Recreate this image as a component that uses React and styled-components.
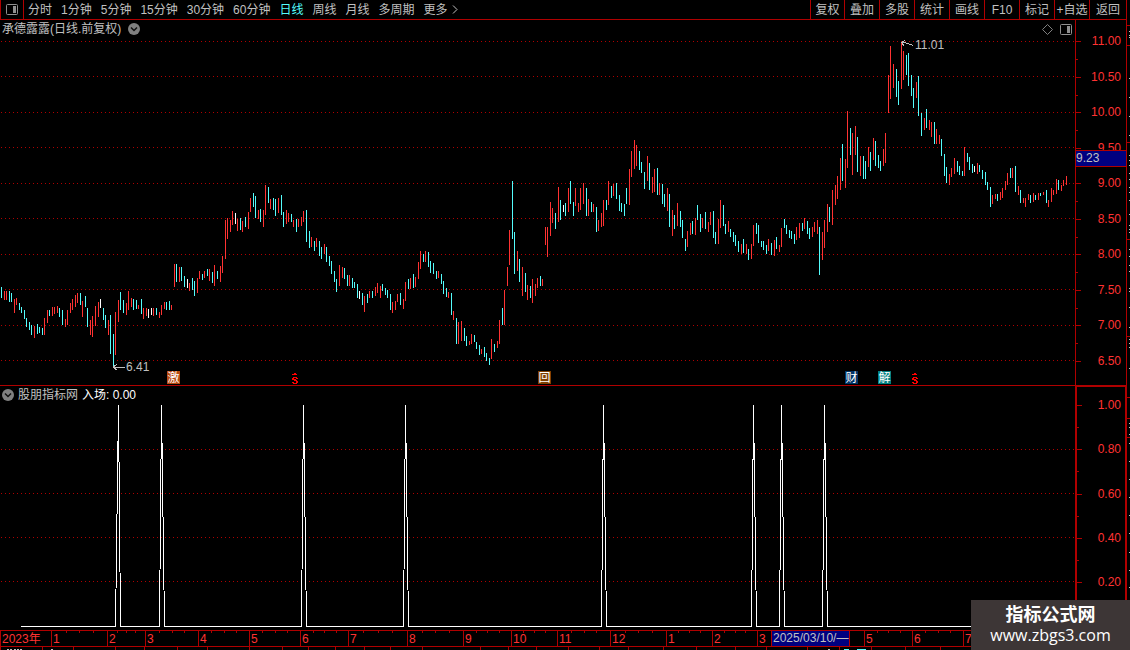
import React, { useState } from 'react';
import styled, { createGlobalStyle } from 'styled-components';

const GlobalStyle = createGlobalStyle`
  * { box-sizing: border-box; }
  body {
    margin: 0;
    background: #000;
    color: #c0c0c0;
    font-family: 'Liberation Sans', 'Noto Sans CJK SC', sans-serif;
    font-size: 12px;
    line-height: 14px;
  }
`;

const PLOT_W = 1075;

const periods = ['分时', '1分钟', '5分钟', '15分钟', '30分钟', '60分钟', '日线', '周线', '月线', '多周期'];
const tools = ['复权', '叠加', '多股', '统计', '画线', 'F10', '标记', '+自选', '返回'];

// one entry per day: x, high, low, r = up, c = down, w = flat
const bars = `
1 287 298 c,4 291 300 r,6 291 300 r,9 291 302 c,11 293 302 c,14 299 313 r,16 298 305 r,19 303 310 c,21 307 313 c,24 310 319 c,
26 318 327 c,29 322 330 c,31 325 335 c,34 326 338 r,37 324 334 c,39 327 333 c,42 328 335 c,44 318 335 r,47 310 323 r,49 310 316 c,
52 307 316 r,54 307 314 r,57 306 313 r,59 308 317 c,62 310 325 c,65 319 327 r,67 310 325 r,70 303 313 r,72 299 310 r,75 295 307 r,
77 293 303 r,80 293 305 c,82 301 317 r,85 296 307 c,87 308 327 c,90 320 335 r,92 316 337 r,95 306 326 r,98 302 317 r,100 299 308 w,
103 308 320 c,105 315 328 c,108 320 335 r,110 315 354 c,113 334 367 c,115 312 355 r,118 300 322 r,120 292 310 c,123 300 313 c,126 303 315 r,
128 291 310 r,131 298 307 r,133 299 310 c,136 300 309 c,138 305 309 r,141 299 314 c,143 308 319 r,146 308 316 r,148 309 318 w,151 308 315 w,
153 308 316 r,156 308 315 c,159 312 318 r,161 305 315 r,164 302 309 r,166 302 310 c,169 301 310 c,171 305 310 r,174 264 287 r,176 264 282 c,
179 267 282 r,181 267 281 c,184 276 287 c,187 279 288 w,189 283 291 r,192 278 290 c,194 281 296 c,197 278 293 r,199 271 279 r,202 274 280 c,
204 271 278 r,207 269 276 c,209 269 281 r,212 272 283 c,214 265 286 r,217 271 279 c,220 266 282 r,222 256 273 r,225 220 259 r,227 218 239 r,
230 220 232 r,232 211 225 r,235 213 224 w,237 219 231 r,240 218 230 c,242 221 232 r,245 217 227 c,248 212 229 r,250 198 212 r,253 193 207 c,
255 196 218 c,258 210 219 r,260 209 222 c,263 210 227 r,265 185 215 r,268 187 203 c,270 199 209 r,273 198 210 c,275 199 216 c,278 198 213 r,
281 195 215 c,283 212 227 c,286 210 224 r,288 213 222 r,291 214 222 c,293 220 227 r,296 219 232 c,298 219 227 r,301 217 226 r,303 211 222 r,
306 210 242 c,309 231 248 c,311 237 247 r,314 241 251 c,316 238 247 r,319 241 256 c,321 247 259 c,324 244 254 r,326 247 262 c,329 256 266 c,
331 261 274 c,334 271 282 c,336 279 292 c,339 265 286 r,342 267 278 r,344 268 279 c,347 275 286 c,349 275 286 r,352 278 288 c,354 282 288 c,
357 284 298 c,359 291 299 w,362 293 305 c,364 296 312 r,367 294 303 c,369 291 298 r,372 291 298 c,375 287 296 r,377 283 293 r,380 286 298 r,
382 284 291 c,385 288 295 c,387 290 298 c,390 294 310 c,392 302 313 r,395 301 310 r,397 294 302 r,400 293 305 c,403 299 309 r,405 282 301 r,
408 279 289 c,410 278 289 r,413 274 288 c,415 277 287 r,418 262 279 r,420 251 269 r,423 254 262 c,425 251 262 r,428 252 267 c,430 261 273 c,
433 263 274 c,436 271 279 c,438 271 278 r,441 274 284 c,443 281 294 c,446 288 297 c,448 292 298 r,451 293 315 c,453 311 320 r,456 318 344 c,
458 322 344 r,461 321 341 r,464 328 341 c,466 336 346 c,469 341 345 r,471 334 344 r,474 335 342 c,476 342 349 c,479 345 355 c,481 349 354 r,
484 347 357 c,486 353 361 c,489 358 365 c,491 339 359 r,494 344 352 c,497 341 348 r,499 320 344 r,502 308 325 c,504 290 325 r,507 267 286 r,
509 230 265 r,512 181 239 c,514 232 274 c,517 251 271 r,519 259 282 c,522 267 296 r,525 273 292 c,527 285 300 r,530 286 298 c,532 279 303 r,
535 284 296 r,537 278 288 r,540 276 286 c,542 279 286 r,545 227 245 r,547 227 257 r,550 202 236 r,552 208 223 r,555 213 229 c,558 187 222 r,
560 200 220 c,563 205 212 w,565 203 216 c,568 188 212 r,570 181 204 c,573 202 216 c,575 188 206 r,578 203 212 r,580 188 210 r,583 183 204 r,
586 188 216 c,588 199 216 r,591 202 212 c,593 204 212 r,596 207 232 c,598 220 231 r,601 213 227 r,603 200 226 r,606 200 210 c,608 181 205 r,
611 186 198 c,613 184 196 r,616 183 199 c,619 195 211 c,621 203 212 c,624 204 216 c,626 188 204 c,629 169 205 r,631 151 177 r,634 140 169 r,
636 145 166 r,639 151 170 c,641 162 173 c,644 172 189 c,647 156 181 r,649 163 190 c,652 177 193 r,654 169 192 r,657 168 195 c,659 183 195 r,
662 184 204 c,664 194 207 c,667 188 211 r,669 194 227 c,672 210 236 r,674 215 229 c,677 203 226 r,680 211 227 c,682 220 238 c,685 239 251 c,
687 231 247 r,690 223 235 r,692 221 234 c,695 218 235 r,697 205 220 c,700 214 232 c,702 218 228 r,705 212 229 c,708 222 232 r,710 212 225 r,
713 211 238 c,715 232 244 c,718 219 244 r,720 200 228 r,723 205 226 c,725 224 234 c,728 221 232 r,730 229 237 c,733 232 242 c,735 235 246 c,
738 241 252 c,741 244 254 r,743 239 253 c,746 244 254 r,748 249 260 c,751 244 259 r,753 225 246 r,756 223 234 c,758 225 243 c,761 241 247 c,
763 241 250 c,766 245 254 c,768 239 251 r,771 243 255 c,774 240 256 r,776 237 249 c,779 245 252 r,781 228 247 r,784 219 228 c,786 225 234 c,
789 230 238 c,791 231 239 c,794 234 244 c,796 227 240 r,799 223 238 r,802 223 231 c,804 218 229 r,807 221 234 c,809 228 239 c,812 227 237 r,
814 222 232 r,817 220 234 r,819 227 275 c,822 232 260 r,824 220 248 r,827 204 232 r,829 207 222 c,832 190 225 r,835 185 205 r,837 176 199 r,
840 158 190 r,842 144 181 c,845 159 188 r,847 111 168 r,850 128 155 c,852 133 175 r,855 126 155 r,857 137 172 c,860 156 176 r,863 156 179 c,
865 161 179 c,868 147 167 r,870 152 171 c,873 138 160 r,875 141 166 c,878 155 168 c,880 161 171 c,883 149 166 r,885 133 163 r,888 75 113 r,
890 46 99 r,893 64 88 r,896 69 97 c,898 81 105 c,901 42 89 r,903 51 80 r,906 55 75 c,908 53 86 c,911 75 96 c,913 88 108 c,
916 82 98 r,918 76 116 c,921 113 136 c,924 118 130 r,926 109 128 c,929 120 130 r,931 122 137 r,934 122 144 c,936 129 144 r,939 135 144 r,
941 139 156 c,944 154 176 c,946 167 183 c,949 174 185 r,951 168 177 r,954 158 174 r,957 161 172 c,959 166 175 c,962 171 176 c,964 147 176 r,
967 153 162 c,969 157 170 c,972 164 173 c,974 166 172 w,977 163 174 r,979 165 172 c,982 170 179 c,985 172 185 c,987 182 190 c,990 187 207 c,
992 195 204 r,995 194 199 r,997 194 201 c,1000 192 200 r,1002 188 198 r,1005 181 190 r,1007 173 185 r,1010 168 178 c,1012 168 178 r,1015 166 192 c,
1018 186 195 r,1020 190 203 c,1023 198 203 r,1025 198 207 r,1028 194 200 r,1030 195 203 c,1033 193 202 r,1035 195 200 c,1038 193 200 r,1040 193 196 c,
1043 192 195 r,1046 190 203 c,1048 200 207 r,1051 188 202 r,1053 190 195 r,1056 179 194 r,1058 180 190 c,1061 185 191 r,1063 180 186 r,1066 176 185 r
`.trim().split(',').map((b) => {
  const [x, high, low, kind] = b.trim().split(' ');
  return { x: +x, high: +high, low: +low, kind };
});

const barColors = { r: '#ff3232', c: '#54fcfc', w: '#ffffff' };

const priceLines = [41, 76, 112, 147, 183, 218, 254, 289, 325, 360];
const prices = ['11.00', '10.50', '10.00', '9.50', '9.00', '8.50', '8.00', '7.50', '7.00', '6.50'];
const signalLines = [449, 493, 537, 581];
const signalLevels = ['1.00', '0.80', '0.60', '0.40', '0.20'];

// left foot, peak, right foot
const signals = [
  [115, 118, 120], [159, 161, 164], [301, 303, 306], [403, 405, 408],
  [601, 603, 606], [751, 753, 756], [779, 781, 784], [822, 824, 827],
];

const events = [
  { x: 167, text: '激', bg: '#b84a10' },
  { x: 292 },
  { x: 538, text: '回', bg: '#804000' },
  { x: 845, text: '财', bg: '#003366' },
  { x: 878, text: '解', bg: '#008080' },
  { x: 912 },
];

// label, width share, has week ticks
const months = [
  ['2023年', 51], ['1', 56, 1], ['2', 38, 1], ['3', 53, 1], ['4', 51, 1], ['5', 51, 1], ['6', 48, 1],
  ['7', 59, 1], ['8', 56, 1], ['9', 48, 1], ['10', 46, 1], ['11', 53, 1], ['12', 56, 1], ['1', 46, 1],
  ['2', 45, 1], ['3', 107], ['5', 48, 1], ['6', 51, 1], ['7', 163, 1],
];

const pct = (x) => `${(x / PLOT_W) * 100}%`;

const Page = styled.div`
  display: flex;
  background: #000;
`;

const Main = styled.main`
  flex: 1;
  min-width: 0;
`;

const Toolbar = styled.nav`
  display: flex;
  justify-content: space-between;
  height: 20px;
  border: 1px solid #b00000;
  border-top: 0;
`;

const Group = styled.div`
  display: flex;
  align-items: stretch;
  gap: ${(p) => p.$gap || 0}px;
`;

const PlainButton = styled.button`
  padding: 0;
  border: 0;
  background: none;
  color: inherit;
  font: inherit;
  white-space: nowrap;
  cursor: pointer;
`;

const LayoutButton = styled(PlainButton)`
  width: 23px;
  margin-right: -5px;
  border-right: 1px solid #b00000;
  display: flex;
  align-items: center;
  justify-content: center;
`;

const PeriodButton = styled(PlainButton)`
  display: flex;
  align-items: center;
  gap: 4px;
  color: ${(p) => (p.$active ? '#54fcfc' : '#c0c0c0')};
`;

const ToolButton = styled(PlainButton)`
  width: 35px;
  border-left: 1px solid #b00000;

  &:first-child {
    width: 34px;
  }

  &:last-child {
    width: 37px;
  }
`;

const Row = styled.section`
  display: flex;
  height: ${(p) => p.$height}px;
  border-bottom: ${(p) => (p.$line ? '1px solid #b00000' : '0')};
`;

const Pane = styled.div`
  flex: 1;
  min-width: 0;
  display: flex;
  flex-direction: column;
`;

const PaneHead = styled.header`
  display: flex;
  align-items: center;
  gap: ${(p) => p.$gap}px;
  height: 18px;
  padding: 0 3px 0 2px;
`;

const Spacer = styled.span`
  flex: 1;
`;

const Name = styled.h1`
  margin: 0;
  font-size: 12px;
  font-weight: 400;
`;

const Value = styled.span`
  color: #fff;
`;

const IconButton = styled(PlainButton)`
  display: flex;
`;

const Plot = styled.div`
  position: relative;
  flex: 1;
  min-height: 0;
`;

const Canvas = styled.svg`
  display: block;
  width: 100%;
  height: 100%;
`;

const Note = styled.span`
  position: absolute;
  top: ${(p) => p.$top}px;
  display: flex;
  align-items: center;
`;

const EventMark = styled.span`
  position: absolute;
  bottom: 1px;
  width: 13px;
  height: 13px;
  background: ${(p) => p.$bg};
  color: #fff;
  font-size: 12px;
  line-height: 14px;
  text-align: center;
`;

const DividendMark = styled.svg`
  position: absolute;
  bottom: 1px;
`;

const Scale = styled.div`
  position: relative;
  display: flex;
  flex-direction: column;
  justify-content: space-between;
  width: 52px;
  padding: ${(p) => p.$pad};
  border: solid #b00000;
  border-width: ${(p) => (p.$selected ? '1px 2px 0' : '0 1px')};
`;

const Level = styled.span`
  position: relative;
  color: #ff3232;
  text-align: right;
  padding-right: ${(p) => p.$inset}px;

  &::before,
  &:not(:last-of-type)::after {
    content: '';
    position: absolute;
    left: 0;
    top: 7px;
    width: 5px;
    height: 1px;
    background: #b00000;
  }

  &:not(:last-of-type)::after {
    top: ${(p) => p.$half}px;
    width: 2px;
  }
`;

const Cursor = styled.output`
  position: absolute;
  left: 0;
  right: 0;
  top: 130px;
  height: 17px;
  border: solid #b00000;
  border-width: 1px 0;
  background: #000080;
  color: #c0c0c0;
`;

const TimeAxis = styled.div`
  position: relative;
  display: grid;
  grid-template-columns: ${months.map((m) => `minmax(0, ${m[1]}fr)`).join(' ')};
  height: 17px;
  border: 1px solid #b00000;
  border-left: 0;
  color: #ff3232;
`;

const Month = styled.span`
  padding-left: 1px;
  line-height: 16px;
  white-space: nowrap;
  border-left: 1px solid #b00000;
  background-repeat: no-repeat;
  background-size: 1px 2px;
  background-position: 25% 0, 50% 0, 75% 0;
  background-image: ${(p) => (p.$ticks
    ? 'linear-gradient(#b00000, #b00000), linear-gradient(#b00000, #b00000), linear-gradient(#b00000, #b00000)'
    : 'none')};
`;

const DateCursor = styled.output`
  position: absolute;
  top: 0;
  width: 79px;
  height: 15px;
  padding-left: 1px;
  border: solid #b00000;
  border-width: 0 1px;
  background: #000080;
  color: #c0c0c0;
  white-space: nowrap;
  overflow: hidden;
`;

const NextRuler = styled.svg`
  display: block;
  width: 100%;
  height: 3px;
`;

const SideStrip = styled.svg`
  flex: none;
  width: 3px;
  height: 650px;
`;

const Watermark = styled.a`
  position: fixed;
  right: 0;
  bottom: 0;
  width: 159px;
  height: 50px;
  padding-top: 4px;
  background: #3d3636;
  color: #fff;
  text-align: center;
  text-decoration: none;
  font-size: 16px;
  line-height: 20px;
  font-family: 'Open Sans', 'Noto Sans CJK SC', sans-serif;
`;

const SiteName = styled.strong`
  display: block;
  font-size: 18px;
  line-height: 21px;
`;

const PanelIcon = () => (
  <svg width="12" height="11" viewBox="0 0 12 11" aria-hidden="true">
    <rect x="0.5" y="0.5" width="11" height="10" rx="1" fill="none" stroke="#909090" />
    <rect x="7" y="2" width="3" height="7" fill="#909090" />
  </svg>
);

const MenuDot = () => (
  <svg width="12" height="12" viewBox="0 0 12 12" aria-hidden="true">
    <circle cx="6" cy="6" r="6" fill="#808080" />
    <path d="M3 4.5 L6 7.5 L9 4.5" fill="none" stroke="#101010" strokeWidth="1.5" />
  </svg>
);

const Dots = ({ lines }) => lines.map((y) => (
  <line key={y} x1="1" x2={PLOT_W} y1={y + 0.5} y2={y + 0.5} stroke="#b00000" strokeDasharray="1 3" />
));

const PricePlot = () => (
  <Plot>
    <Canvas viewBox={`0 38 ${PLOT_W} 347`} preserveAspectRatio="none" shapeRendering="crispEdges">
      <Dots lines={priceLines} />
      {bars.map((b) => (
        <rect key={b.x} x={b.x} y={b.high} width="1" height={b.low - b.high} fill={barColors[b.kind]} />
      ))}
    </Canvas>
    <Note $top={322} style={{ left: pct(113) }}>
      <svg width="13" height="9" viewBox="0 0 13 9" fill="none" stroke="#c0c0c0" shapeRendering="crispEdges">
        <path d="M0 4.5 H12 M0 4.5 L4 1 M0 4.5 L4 7" />
      </svg>
      6.41
    </Note>
    <Note $top={0} style={{ left: pct(901) }}>
      <svg width="14" height="13" viewBox="0 0 14 13" fill="none" stroke="#c0c0c0" shapeRendering="crispEdges">
        <path d="M0.5 3.5 L5 4 L12 6.5 M0.5 3.5 L4 1.5 M0.5 3.5 L3 7" />
      </svg>
      11.01
    </Note>
    {events.map((e) => (e.text
      ? <EventMark key={e.x} $bg={e.bg} style={{ left: pct(e.x) }}>{e.text}</EventMark>
      : (
        <DividendMark key={e.x} width="6" height="11" viewBox="0 0 6 11" shapeRendering="crispEdges" style={{ left: pct(e.x) }}>
          <path d="M2 0h2v1h1v1H0V1h2zM1 4h4v1h1v1H4V5H2v1h2v1h1v1h1v2H5v1H1v-1H0V9h2v1h2V8H2V7H0V5h1z" fill="#ff0000" />
        </DividendMark>
      )))}
  </Plot>
);

const SignalPlot = () => {
  const points = signals.map(([l, x, r]) => `${l},626 ${x},405 ${r},626`).join(' ');
  return (
    <Plot>
      <Canvas viewBox={`0 404 ${PLOT_W} 226`} preserveAspectRatio="none" shapeRendering="crispEdges">
        <Dots lines={signalLines} />
        <polyline points={`20,626 ${points} 1067,626`} transform="translate(0.5 0.5)" fill="none" stroke="#fff" strokeLinejoin="bevel" />
      </Canvas>
    </Plot>
  );
};

const sideTicks = [31, 35, 37, 78, 97, 116, 135, 155, 160, 165, 173, 179, 187, 192, 200, 214, 225, 229, 232, 249, 256,
  265, 271, 288, 291, 307, 327, 339, 343, 347, 368, 423, 427, 434, 443, 461, 479, 497, 515, 533, 552, 570, 587];
const sideLines = [25, 45, 142, 239, 336, 397, 418, 437];
const nextTicks = [0, 42, 73, 115, 144, 177, 207, 249, 282, 308, 335, 364, 390, 422, 480, 508, 536, 568, 599, 628, 663,
  696, 735, 766, 807, 839, 871, 905, 940];

const App = () => {
  const [period, setPeriod] = useState('日线');

  return (
    <>
      <GlobalStyle />
      <Page>
        <Main>
          <Toolbar>
            <Group $gap={9}>
              <LayoutButton aria-label="布局"><PanelIcon /></LayoutButton>
              {periods.map((p) => (
                <PeriodButton key={p} $active={p === period} onClick={() => setPeriod(p)}>{p}</PeriodButton>
              ))}
              <PeriodButton>
                更多
                <svg width="6" height="9" viewBox="0 0 6 9" fill="none" stroke="#c0c0c0" aria-hidden="true">
                  <path d="M1 0.5 L5 4.5 L1 8.5" />
                </svg>
              </PeriodButton>
            </Group>
            <Group>
              {tools.map((t) => <ToolButton key={t}>{t}</ToolButton>)}
            </Group>
          </Toolbar>

          <Row $height={366} $line>
            <Pane>
              <PaneHead $gap={7}>
                <Name>承德露露(日线.前复权)</Name>
                <IconButton aria-label="菜单"><MenuDot /></IconButton>
                <Spacer />
                <IconButton aria-label="标记">
                  <svg width="11" height="11" viewBox="0 0 11 11" fill="none" stroke="#808080">
                    <path d="M5.5 0.5 L10.5 5.5 L5.5 10.5 L0.5 5.5 Z" />
                  </svg>
                </IconButton>
                <IconButton aria-label="侧栏"><PanelIcon /></IconButton>
              </PaneHead>
              <PricePlot />
            </Pane>
            <Scale $pad="14px 0 17px">
              {prices.map((p) => <Level key={p} $inset={5} $half={25}>{p}</Level>)}
              <Cursor>9.23</Cursor>
            </Scale>
          </Row>

          <Row $height={244}>
            <Pane>
              <PaneHead $gap={4}>
                <IconButton aria-label="指标菜单"><MenuDot /></IconButton>
                <span>股朋指标网</span>
                <Value>入场: 0.00</Value>
              </PaneHead>
              <SignalPlot />
            </Pane>
            <Scale $selected $pad="11px 0 41px">
              {signalLevels.map((l) => <Level key={l} $inset={4} $half={29}>{l}</Level>)}
            </Scale>
          </Row>

          <TimeAxis>
            {months.map(([label, , ticks], i) => (
              <Month key={i} $ticks={ticks}>{label}</Month>
            ))}
            <DateCursor style={{ left: `${(771 / 1126) * 100}%` }}>2025/03/10/—</DateCursor>
          </TimeAxis>
          <NextRuler viewBox="0 0 1127 3" preserveAspectRatio="none" shapeRendering="crispEdges">
            {nextTicks.map((x) => <rect key={x} x={x} width="1" height="3" fill="#b00000" />)}
            {[7, 10, 14, 17, 20, 51, 828].map((x) => <rect key={x} x={x} y="2" width="2" height="1" fill="#c0c0c0" />)}
            <rect x="844" y="2" width="5" height="1" fill="#54fcfc" />
            <rect x="857" y="2" width="9" height="1" fill="#54fcfc" />
          </NextRuler>
        </Main>

        <SideStrip viewBox="0 0 3 650" shapeRendering="crispEdges" aria-hidden="true">
          {sideLines.map((y) => <rect key={y} y={y} width="3" height="1" fill="#b00000" />)}
          {sideTicks.map((y) => <rect key={y} x="2" y={y} width="1" height="1" fill="#c0c0c0" />)}
        </SideStrip>
      </Page>

      <Watermark href="#">
        <SiteName>指标公式网</SiteName>
        www.zbgs3.com
      </Watermark>
    </>
  );
};

export default App;
